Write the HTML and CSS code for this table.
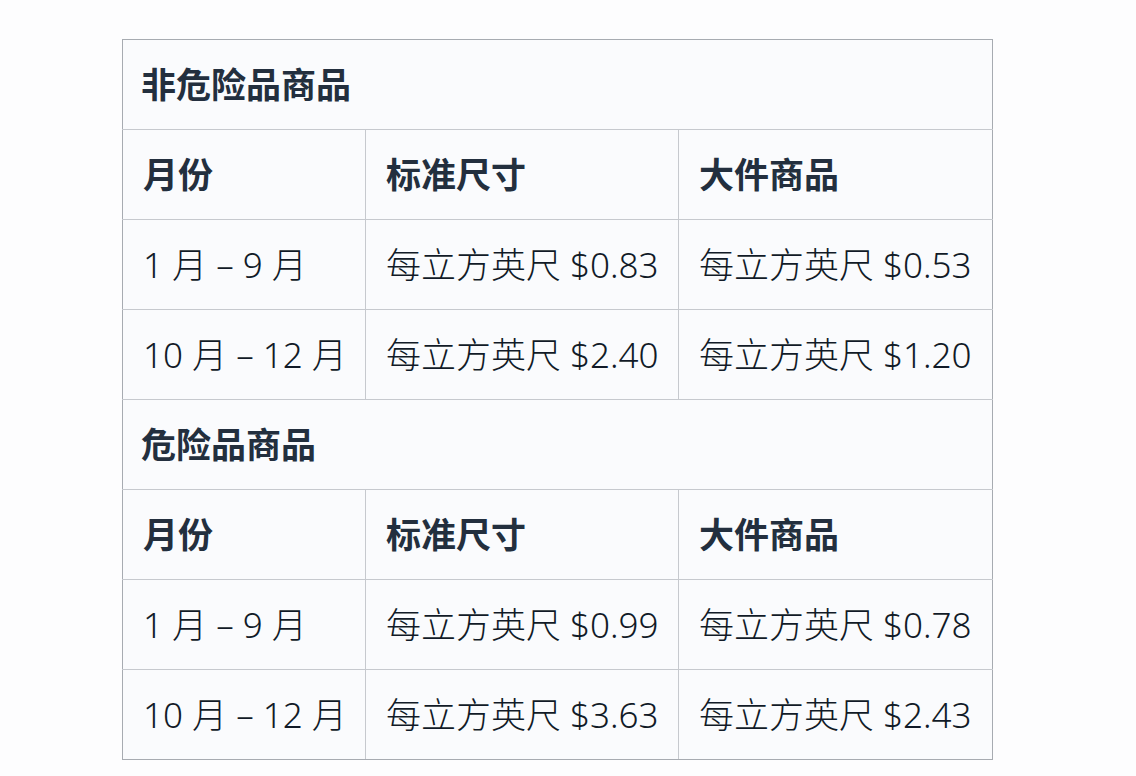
FILE: index.html
```html
<!DOCTYPE html>
<html lang="zh-CN">
<head>
<meta charset="utf-8">
<title>仓储费</title>
<link rel="stylesheet" href="styles.css">
</head>
<body>
<table class="fees">
  <colgroup><col class="c1"><col class="c2"><col class="c3"></colgroup>
  <tr class="first"><th class="section" colspan="3">非危险品商品</th></tr>
  <tr class="head"><th>月份</th><th>标准尺寸</th><th>大件商品</th></tr>
  <tr><td>1 月 – 9 月</td><td>每立方英尺 $0.83</td><td>每立方英尺 $0.53</td></tr>
  <tr><td>10 月 – 12 月</td><td>每立方英尺 $2.40</td><td>每立方英尺 $1.20</td></tr>
  <tr class="split"><th class="section" colspan="3">危险品商品</th></tr>
  <tr class="head"><th>月份</th><th>标准尺寸</th><th>大件商品</th></tr>
  <tr><td>1 月 – 9 月</td><td>每立方英尺 $0.99</td><td>每立方英尺 $0.78</td></tr>
  <tr class="last"><td>10 月 – 12 月</td><td>每立方英尺 $3.63</td><td>每立方英尺 $2.43</td></tr>
</table>
</body>
</html>
```
FILE: styles.css
```css
html, body {
  margin: 0;
  padding: 0;
  background: #fdfdfe;
}
body {
  padding: 39px 0 0 122px;
  font-family: "Noto Sans", "Noto Sans CJK SC", sans-serif;
  color: #232f3e;
}
.fees {
  border-collapse: collapse;
  background: #fafbfd;
  width: 870px;
  table-layout: fixed;
}
.c1 { width: 243px; }
.c2 { width: 313px; }
.c3 { width: 314px; }
.fees th, .fees td {
  height: 90px;
  padding: 0 0 0 18px;
  border: 1px solid #c6c9ce;
  text-align: left;
  font-size: 35px;
  line-height: 1;
  white-space: nowrap;
  box-sizing: border-box;
  vertical-align: middle;
}
.fees th { font-weight: 700; }
.fees td { font-weight: 300; padding-left: 20px; color: #111a27; }
.fees .head th { padding-left: 20px; }
.fees tr > :first-child { border-left-color: #a7abb1; }
.fees tr > :last-child { border-right-color: #a7abb1; }
.fees .first > * { border-top-color: #a7abb1; }
.fees .last > * { border-bottom-color: #a7abb1; }
.fees .split > * { border-top-color: #b4b8be; }
```
